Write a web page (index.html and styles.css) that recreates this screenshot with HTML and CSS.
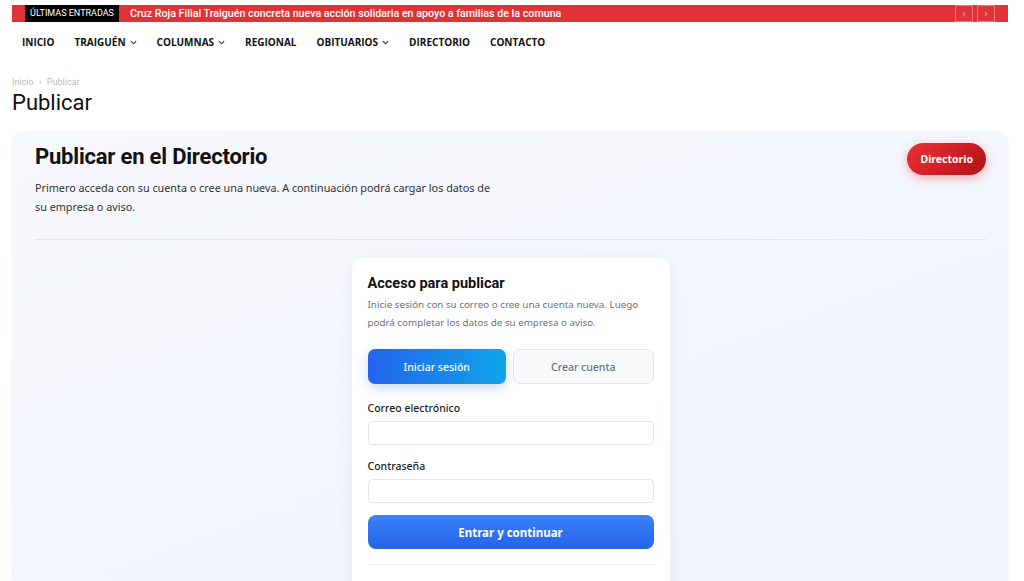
FILE: index.html
```html
<!DOCTYPE html>
<html lang="es">
<head>
    <meta charset="UTF-8">
    <meta name="viewport" content="width=device-width, initial-scale=1.0">
    <title>Publicar</title>
    <link rel="stylesheet" href="styles.css">
</head>
<body>
    <div class="page">
        <!-- Ticker -->
        <div class="ticker">
            <span class="ticker-label">ÚLTIMAS ENTRADAS</span>
            <span class="ticker-text">Cruz Roja Filial Traiguén concreta nueva acción solidaria en apoyo a familias de la comuna</span>
            <div class="ticker-nav">
                <span class="ticker-btn">&lsaquo;</span>
                <span class="ticker-btn">&rsaquo;</span>
            </div>
        </div>

        <!-- Main menu -->
        <nav class="menu">
            <a href="#">INICIO</a>
            <a href="#">TRAIGUÉN <svg class="caret" viewBox="0 0 8 5" width="7" height="5"><path d="M1 1l3 3 3-3" fill="none" stroke="#333" stroke-width="1.3"/></svg></a>
            <a href="#">COLUMNAS <svg class="caret" viewBox="0 0 8 5" width="7" height="5"><path d="M1 1l3 3 3-3" fill="none" stroke="#333" stroke-width="1.3"/></svg></a>
            <a href="#">REGIONAL</a>
            <a href="#">OBITUARIOS <svg class="caret" viewBox="0 0 8 5" width="7" height="5"><path d="M1 1l3 3 3-3" fill="none" stroke="#333" stroke-width="1.3"/></svg></a>
            <a href="#">DIRECTORIO</a>
            <a href="#">CONTACTO</a>
        </nav>

        <div class="breadcrumb">Inicio <span class="sep">&rsaquo;</span> Publicar</div>
        <h1 class="page-title">Publicar</h1>

        <!-- Panel -->
        <section class="panel">
            <div class="panel-head">
                <div>
                    <h2>Publicar en el Directorio</h2>
                    <p class="panel-intro">Primero acceda con su cuenta o cree una nueva. A continuación podrá cargar los datos de su empresa o aviso.</p>
                </div>
                <a href="#" class="btn-dir">Directorio</a>
            </div>
            <hr class="panel-line">

            <div class="auth-card">
                <h3>Acceso para publicar</h3>
                <p class="auth-desc">Inicie sesión con su correo o cree una cuenta nueva. Luego podrá completar los datos de su empresa o aviso.</p>

                <div class="tabs">
                    <button class="tab active">Iniciar sesión</button>
                    <button class="tab">Crear cuenta</button>
                </div>

                <label class="field-label" for="email">Correo electrónico</label>
                <input class="field" type="email" id="email">

                <label class="field-label next" for="pass">Contraseña</label>
                <input class="field" type="password" id="pass">

                <button class="btn-submit">Entrar y continuar</button>
                <hr class="card-line">
                <a href="#" class="forgot">¿Olvidó su contraseña?</a>
            </div>
        </section>
    </div>
</body>
</html>
```

FILE: styles.css
```css
body {
    margin: 0;
    padding: 0;
    font-family: 'Noto Sans', sans-serif;
    background-color: #fff;
    color: #222;
    overflow: hidden;
}

.page {
    padding: 5px 16px 0 12px;
}

/* Ticker */
.ticker {
    display: flex;
    align-items: center;
    height: 17px;
    background-color: #e03237;
    padding-left: 13px;
    padding-right: 13px;
}

.ticker-label {
    background-color: #000;
    color: #fff;
    font-family: 'Roboto', sans-serif;
    font-size: 9px;
    height: 17px;
    line-height: 17px;
    width: 94px;
    text-align: center;
}

.ticker-text {
    flex: 1;
    color: #fff;
    font-family: 'Roboto', sans-serif;
    font-size: 10.7px;
    font-weight: 500;
    padding-left: 11px;
    white-space: nowrap;
}

.ticker-nav {
    display: flex;
    gap: 4px;
}

.ticker-btn {
    width: 18px;
    height: 17px;
    box-sizing: border-box;
    border: 1px solid rgba(255, 255, 255, 0.35);
    color: rgba(255, 255, 255, 0.6);
    font-size: 11px;
    line-height: 14px;
    text-align: center;
}

/* Menu */
.menu {
    display: flex;
    gap: 20px;
    padding: 0 10px;
    height: 40px;
    align-items: center;
}

.menu a {
    font-family: 'Open Sans', sans-serif;
    font-weight: 700;
    font-size: 10px;
    color: #111;
    text-decoration: none;
    display: flex;
    align-items: center;
    gap: 4px;
}

.caret {
    margin-top: 1px;
}

/* Breadcrumb & title */
.breadcrumb {
    margin-top: 15px;
    font-family: 'Roboto', sans-serif;
    font-size: 9px;
    color: #bdbdbd;
}

.breadcrumb .sep {
    margin: 0 3px;
}

.page-title {
    margin: 3px 0 0;
    font-family: 'Roboto', sans-serif;
    font-weight: 400;
    font-size: 22px;
    color: #111;
}

/* Panel */
.panel {
    margin-top: 16px;
    background: linear-gradient(160deg, #f6f8fc 0%, #f2f5fc 50%, #eef2fd 100%);
    border-radius: 12px;
    padding: 13px 22px 40px 23px;
    height: 600px;
    box-shadow: 0 1px 3px rgba(20, 30, 60, 0.05);
}

.panel-head {
    display: flex;
    justify-content: space-between;
    align-items: flex-start;
}

.panel-head h2 {
    margin: 0;
    font-family: 'Roboto', sans-serif;
    font-weight: 700;
    font-size: 22px;
    color: #111;
    letter-spacing: -0.2px;
}

.panel-intro {
    margin: 9px 0 0;
    max-width: 462px;
    font-size: 10.8px;
    line-height: 19px;
    color: #333;
}

.btn-dir {
    margin-top: -1px;
    display: inline-block;
    padding: 0 13px;
    height: 32px;
    line-height: 32px;
    border-radius: 16px;
    background: linear-gradient(135deg, #e8323a 0%, #d21f26 50%, #ad1519 100%);
    color: #fff;
    font-size: 10.5px;
    font-weight: 700;
    text-decoration: none;
    box-shadow: 0 3px 10px rgba(220, 38, 38, 0.35);
}

.panel-line {
    border: none;
    border-top: 1px solid #e3e6ee;
    margin: 23px 0 18px;
}

/* Auth card */
.auth-card {
    width: 286px;
    margin: 0 auto;
    background-color: #fff;
    border-radius: 12px;
    padding: 17px 16px 20px;
    box-shadow: 0 4px 18px rgba(30, 41, 80, 0.06);
}

.auth-card h3 {
    margin: 0;
    font-family: 'Roboto', sans-serif;
    font-weight: 700;
    font-size: 14.5px;
    color: #111;
}

.auth-desc {
    margin: 4px 0 0;
    font-size: 9.8px;
    line-height: 18px;
    color: #6b7280;
}

.tabs {
    display: flex;
    gap: 7px;
    margin-top: 17px;
}

.tab {
    flex: 1;
    height: 35px;
    border-radius: 7px;
    font-family: 'Noto Sans', sans-serif;
    font-size: 10.5px;
    font-weight: 500;
    cursor: pointer;
    border: 1px solid #e2e6ec;
    background-color: #f8f9fb;
    color: #64748b;
}

.tab.active {
    border: none;
    background: linear-gradient(90deg, #2563eb 0%, #0ea5e9 100%);
    color: #fff;
    box-shadow: 0 4px 12px rgba(37, 99, 235, 0.25);
}

.field-label {
    display: block;
    margin-top: 17px;
    font-size: 10.5px;
    font-weight: 500;
    color: #222;
}

.field-label.next {
    margin-top: 14px;
}

.field {
    display: block;
    box-sizing: border-box;
    width: 100%;
    height: 24px;
    margin-top: 6px;
    border: 1px solid #e3e5e8;
    border-radius: 4px;
    background: #fff;
}

.btn-submit {
    display: block;
    width: 100%;
    height: 34px;
    margin-top: 12px;
    border: none;
    border-radius: 8px;
    background: linear-gradient(180deg, #3b82f6 0%, #2563eb 100%);
    color: #fff;
    font-family: 'Noto Sans', sans-serif;
    font-size: 11.5px;
    font-weight: 700;
    cursor: pointer;
}

.card-line {
    border: none;
    border-top: 1px solid #eef0f3;
    margin: 15px 0 10px;
}

.forgot {
    font-size: 11px;
    color: #3b82f6;
    text-decoration: none;
}
```
